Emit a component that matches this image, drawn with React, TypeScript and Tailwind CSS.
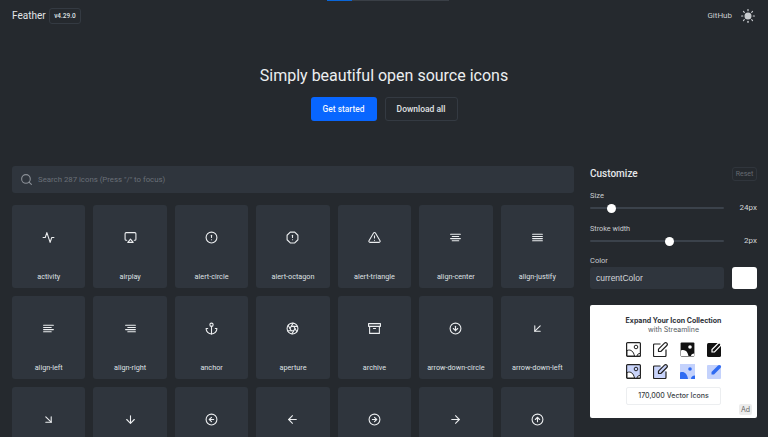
import {
  FiActivity,
  FiAirplay,
  FiAlertCircle,
  FiAlertOctagon,
  FiAlertTriangle,
  FiAlignCenter,
  FiAlignJustify,
  FiAlignLeft,
  FiAlignRight,
  FiAnchor,
  FiAperture,
  FiArchive,
  FiArrowDownCircle,
  FiArrowDownLeft,
  FiArrowDownRight,
  FiArrowDown,
  FiArrowLeftCircle,
  FiArrowLeft,
  FiArrowRightCircle,
  FiArrowRight,
  FiArrowUpCircle,
  FiSearch,
  FiSun,
} from "react-icons/fi"

const ICONS = [
  { name: "activity", Icon: FiActivity },
  { name: "airplay", Icon: FiAirplay },
  { name: "alert-circle", Icon: FiAlertCircle },
  { name: "alert-octagon", Icon: FiAlertOctagon },
  { name: "alert-triangle", Icon: FiAlertTriangle },
  { name: "align-center", Icon: FiAlignCenter },
  { name: "align-justify", Icon: FiAlignJustify },
  { name: "align-left", Icon: FiAlignLeft },
  { name: "align-right", Icon: FiAlignRight },
  { name: "anchor", Icon: FiAnchor },
  { name: "aperture", Icon: FiAperture },
  { name: "archive", Icon: FiArchive },
  { name: "arrow-down-circle", Icon: FiArrowDownCircle },
  { name: "arrow-down-left", Icon: FiArrowDownLeft },
  { name: "arrow-down-right", Icon: FiArrowDownRight },
  { name: "arrow-down", Icon: FiArrowDown },
  { name: "arrow-left-circle", Icon: FiArrowLeftCircle },
  { name: "arrow-left", Icon: FiArrowLeft },
  { name: "arrow-right-circle", Icon: FiArrowRightCircle },
  { name: "arrow-right", Icon: FiArrowRight },
  { name: "arrow-up-circle", Icon: FiArrowUpCircle },
]

function AdPicture({ fill, accent, line }: { fill: string; accent: string; line?: string }) {
  return (
    <svg width="15" height="15" viewBox="0 0 15 15">
      <rect x="0.6" y="0.6" width="13.8" height="13.8" rx="1" fill={fill} stroke={line ?? "none"} strokeWidth="1.2" />
      <circle cx="10" cy="5" r="1.8" fill={line ? "none" : "#fff"} stroke={line ?? "none"} />
      <path d="M1 8.5c4-1.5 6.500 1 7.500 5.500H1z" fill={accent} stroke={line ?? "none"} />
      <path d="M11 14c0-1.500 1.200-2.500 3.400-2.500V14z" fill={accent} stroke={line ?? "none"} />
    </svg>
  )
}

function AdPencil({ fill, line }: { fill: string; line: string }) {
  return (
    <svg width="15" height="15" viewBox="0 0 15 15" fill="none">
      <path d="M7.500 2H1.500a1 1 0 0 0-1 1v10.500a1 1 0 0 0 1 1H12a1 1 0 0 0 1-1V7.500" fill={fill} stroke={line} strokeWidth="1.200" />
      <path d="M5.500 9.500V7.200L11.500 1.200a1.400 1.400 0 0 1 2.300 2.300L7.800 9.500z" fill={fill} stroke={line} strokeWidth="1.200" strokeLinejoin="round" />
    </svg>
  )
}

export default function App() {
  return (
    <div className="relative h-[437px] w-[768px] overflow-hidden bg-[#25292e] font-['Roboto','Noto_Sans',sans-serif] text-[#e6e8ea]">
      <div className="absolute left-[327px] top-0 flex h-px">
        <div className="w-[25px] bg-[#0a66d8]" />
        <div className="w-[97px] bg-[#3a3f46]" />
      </div>

      <header className="flex h-[32px] items-center justify-between pl-3 pr-[13px]">
        <div className="flex items-center gap-[3px]">
          <span className="text-[10px] leading-none text-[#e3e5e7]">Feather</span>
          <span className="rounded-[3px] border border-[#343a42] px-[4.500px] py-[2px] text-[6.500px] font-medium leading-[10px] text-[#dfe2e5]">v4.29.0</span>
        </div>
        <div className="flex items-center gap-[9px]">
          <span className="text-[8px] text-[#c9cccf]">GitHub</span>
          <FiSun size={14} className="fill-[#c9cccf] text-[#c9cccf]" />
        </div>
      </header>

      <section className="flex flex-col items-center pt-[33px]">
        <h1 className="text-[16px] font-normal leading-[22px] text-[#eceef0]">Simply beautiful open source icons</h1>
        <div className="mt-[10px] flex gap-2">
          <button className="h-6 w-[66px] rounded-[3px] bg-[#0866ff] text-[8.400px] font-medium text-[#f2f6ff]">Get started</button>
          <button className="h-6 w-[73px] rounded-[3px] border border-[#343a42] text-[8.500px] font-medium text-[#e0e2e5]">Download all</button>
        </div>
      </section>

      <div className="mt-[45px] flex gap-4 pl-3 pr-[11px]">
        <main className="w-[562px] shrink-0">
          <div className="flex h-[27px] items-center gap-[5px] rounded-[3px] bg-[#2f353d] pl-[8px]">
            <FiSearch size={13} className="text-[#8b9097]" />
            <span className="text-[7.800px] text-[#6a7078]">Search 287 icons (Press "/" to focus)</span>
          </div>
          <div className="mt-[12px] grid grid-cols-7 gap-x-2 gap-y-2">
            {ICONS.map(({ name, Icon }) => (
              <div key={name} className="flex h-[83px] flex-col items-center rounded-[3px] bg-[#2f353d] pt-[26px]">
                <Icon size={13} strokeWidth={2} className="text-[#eceef0]" />
                <span className="mt-[27px] text-[7.250px] leading-[11px] text-[#dfe1e4]">{name}</span>
              </div>
            ))}
          </div>
        </main>

        <aside className="w-[167px] shrink-0">
          <div className="flex items-center justify-between">
            <h2 className="text-[10px] font-medium leading-4 text-[#e6e8ea]">Customize</h2>
            <button className="h-[14px] w-[25px] rounded-[3px] border border-[#30353c] text-[7px] leading-none text-[#656a71]">Reset</button>
          </div>
          <label className="mt-[8px] block text-[7.500px] leading-[11px] text-[#c8cbce]">Size</label>
          <div className="mt-[1px] flex items-center justify-between">
            <div className="relative h-[2px] w-[134px] rounded-full bg-[#3b424b]">
              <div className="absolute left-[17px] top-[-3.500px] h-[9px] w-[9px] rounded-full bg-white" />
            </div>
            <span className="text-[8px] leading-3 text-[#d3d6d9]">24px</span>
          </div>
          <label className="mt-[9px] block text-[7.250px] leading-[11px] text-[#c8cbce]">Stroke width</label>
          <div className="mt-[1px] flex items-center justify-between">
            <div className="relative h-[2px] w-[134px] rounded-full bg-[#3b424b]">
              <div className="absolute left-[75px] top-[-3.500px] h-[9px] w-[9px] rounded-full bg-white" />
            </div>
            <span className="text-[8px] leading-3 text-[#d3d6d9]">2px</span>
          </div>
          <label className="mt-[8px] block text-[7.500px] leading-[11px] text-[#c8cbce]">Color</label>
          <div className="mt-[1px] flex justify-between">
            <div className="flex h-[22px] w-[134px] items-center rounded-[3px] bg-[#2f353d] pl-[6px] font-['Liberation_Sans',sans-serif] text-[8.500px] text-[#d3d6d9]">currentColor</div>
            <div className="h-[22px] w-[25px] rounded-[3px] bg-white" />
          </div>

          <div className="relative mt-[16px] flex h-[113px] flex-col items-center rounded-[2px] bg-white pt-[11px] font-['Inter',sans-serif]">
            <p className="text-[7px] font-bold leading-[9px] text-[#2b2f36]">Expand Your Icon Collection</p>
            <p className="text-[7px] leading-[10px] text-[#555a61]">with Streamline</p>
            <div className="mt-[7px] grid grid-cols-4 gap-x-[12px] gap-y-[7px]">
              <AdPicture fill="#fff" accent="#fff" line="#222" />
              <AdPencil fill="none" line="#222" />
              <AdPicture fill="#111" accent="#fff" />
              <svg width="15" height="15" viewBox="0 0 15 15">
                <rect y="1" width="14" height="14" rx="1.500" fill="#111" />
                <path d="M5 10V7.500L11 1.500a1.400 1.400 0 0 1 2.300 2.300L7.500 10z" fill="#111" stroke="#fff" strokeWidth="1.200" />
              </svg>
              <AdPicture fill="#c9d4fb" accent="#fff" line="#222" />
              <AdPencil fill="#c9d4fb" line="#222" />
              <svg width="15" height="15" viewBox="0 0 15 15">
                <rect width="15" height="15" fill="#c4d2fc" />
                <circle cx="10" cy="5" r="1.800" fill="#2f6bf2" />
                <path d="M0 8.500c4-1.500 7 1 8 6.500H0z" fill="#2f6bf2" />
                <path d="M11 15c0-2 1.500-3.500 4-3.500V15z" fill="#2f6bf2" />
              </svg>
              <svg width="15" height="15" viewBox="0 0 15 15">
                <rect y="1" width="14" height="14" rx="1" fill="#c4d2fc" />
                <path d="M4.500 10.500V8L11 1.500a1.500 1.500 0 0 1 2.500 2.500L7 10.500z" fill="#2f6bf2" />
              </svg>
            </div>
            <div className="mt-[8px] flex h-[18px] w-[95px] items-center justify-center rounded-[2px] border border-[#eceef0] text-[7px] font-medium text-[#3a3f46]">170,000 Vector Icons</div>
            <span className="absolute bottom-[3px] right-[5px] rounded-[2px] bg-[#ececec] px-[2px] text-[7px] leading-[11px] text-[#666]">Ad</span>
          </div>
        </aside>
      </div>
    </div>
  )
}
